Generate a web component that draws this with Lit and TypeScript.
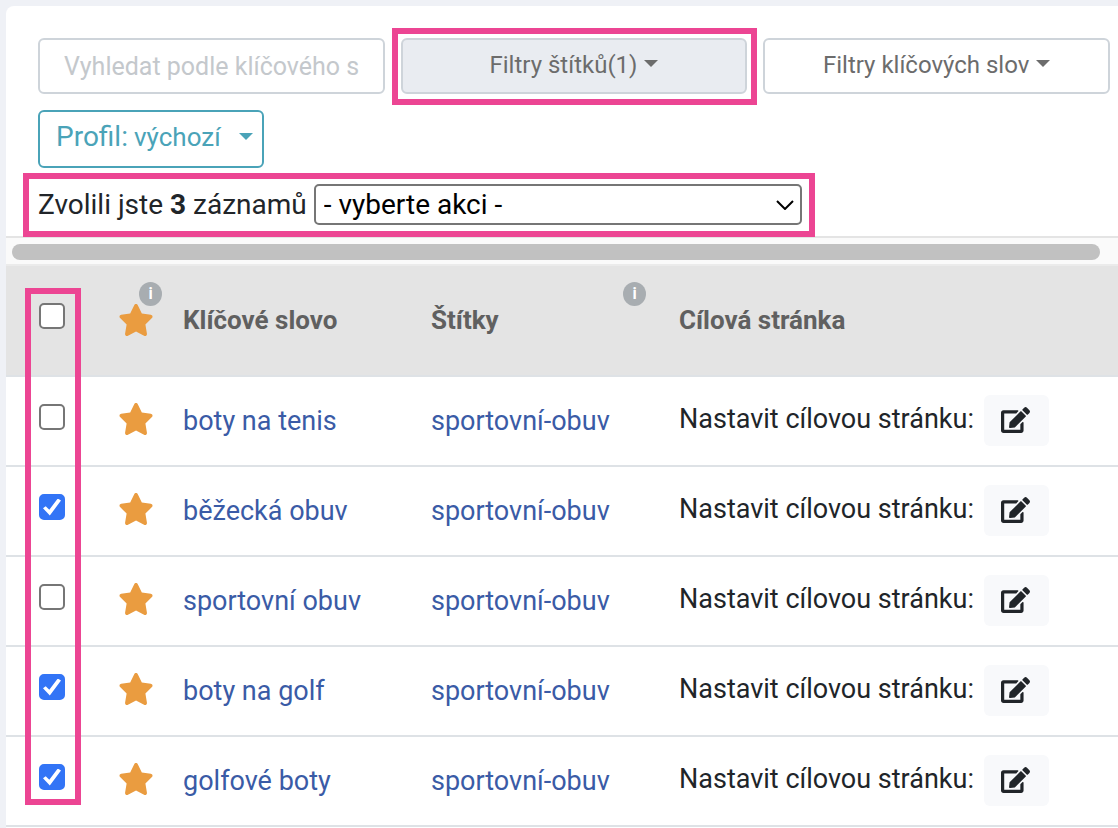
import { LitElement, html, css, svg } from "lit";
import { customElement, state } from "lit/decorators.js";

interface Row {
  keyword: string;
  tag: string;
  selected: boolean;
}

const star = html`<svg class="star" viewBox="0 0 576 512" aria-hidden="true">${svg`<path d="M316.9 18C311.6 7 300.4 0 288.1 0s-23.4 7-28.8 18L195 150.3 51.4 171.5c-12 1.8-22 10.2-25.7 21.7s-.7 24.2 7.9 32.7L137.8 329 113.2 474.7c-2 12 3 24.2 12.9 31.3s23 8 33.8 2.3l128.3-68.5 128.3 68.5c10.8 5.7 23.9 4.9 33.8-2.3s14.9-19.3 12.9-31.3L438.5 329 542.7 225.9c8.6-8.5 11.7-21.2 7.9-32.7s-13.7-19.9-25.7-21.7L381.2 150.3 316.9 18z"/>`}</svg>`;

const pencil = html`<svg class="pencil" viewBox="0 0 576 512" aria-hidden="true">${svg`<path d="M402.6 83.2l90.2 90.2c3.8 3.8 3.8 10 0 13.8L274.4 405.6l-92.8 10.3c-12.4 1.4-22.9-9.1-21.5-21.5l10.3-92.8L388.8 83.2c3.8-3.8 10-3.8 13.8 0zm162-22.9l-48.8-48.8c-15.2-15.2-39.9-15.2-55.2 0l-35.4 35.4c-3.8 3.8-3.8 10 0 13.8l90.2 90.2c3.8 3.8 10 3.8 13.8 0l35.4-35.4c15.2-15.3 15.2-40 0-55.2zM384 346.2V448H64V128h229.8c3.2 0 6.2-1.3 8.5-3.5l40-40c7.6-7.6 2.2-20.5-8.5-20.5H48C21.5 64 0 85.5 0 112v352c0 26.5 21.5 48 48 48h352c26.5 0 48-21.5 48-48V306.2c0-10.7-12.9-16-20.5-8.5l-40 40c-2.2 2.3-3.5 5.3-3.5 8.5z"/>`}</svg>`;

@customElement("app-root")
export class AppRoot extends LitElement {
  @state() private rows: Row[] = [
    { keyword: "boty na tenis", tag: "sportovní-obuv", selected: false },
    { keyword: "běžecká obuv", tag: "sportovní-obuv", selected: true },
    { keyword: "sportovní obuv", tag: "sportovní-obuv", selected: false },
    { keyword: "boty na golf", tag: "sportovní-obuv", selected: true },
    { keyword: "golfové boty", tag: "sportovní-obuv", selected: true },
  ];

  static styles = css`
    :host {
      display: block;
      box-sizing: border-box;
      min-height: 100vh;
      padding: 6px 0 0 6px;
      background: #eff1f6;
      color: #212529;
      font-family: Roboto, "Liberation Sans", sans-serif;
      font-size: 28px;
      line-height: 40px;
    }
    *, *::before, *::after { box-sizing: border-box; }
    button, input, select { font: inherit; margin: 0; }
    .panel {
      min-height: calc(100vh - 6px);
      background: #fff;
      border-top-left-radius: 8px;
    }
    .toolbar { padding: 32px 8px 11px 32px; }
    .filters {
      display: grid;
      grid-template-columns: repeat(3, minmax(0, 1fr));
      gap: 16px;
    }
    .marked { position: relative; }
    .marked::after, .column-mark {
      content: "";
      position: absolute;
      border: 6px solid #ec4593;
      pointer-events: none;
    }
    .filters .marked::after { inset: -10px -10px -11px -9px; }
    .search, .filter {
      display: block;
      width: 100%;
      height: 56px;
      border: 2px solid #ced4da;
      border-radius: 6px;
      background: #fff;
      font-size: 25px;
      line-height: 32px;
    }
    .search { padding: 0 24px; color: #495057; }
    .search::placeholder { color: #c4c8cc; opacity: 1; }
    .filter { padding: 0 0 2px; color: #6c6c6c; font-size: 24px; }
    .filter.active { background: #e9ecf1; }
    .caret {
      display: inline-block;
      margin-left: 7px;
      vertical-align: 6px;
      border: 7px solid transparent;
      border-top-color: currentColor;
      border-bottom: 0;
    }
    .profile {
      display: block;
      height: 58px;
      margin-top: 16px;
      padding: 0 9px 4px 16px;
      border: 2px solid #4aa3b8;
      border-radius: 6px;
      background: #fff;
      color: #4aa3b8;
      font-size: 28px;
    }
    .profile small { margin-left: 6px; font-size: 26px; }
    .profile .caret { margin-left: 18px; }
    .actions {
      display: inline-flex;
      align-items: center;
      gap: 7px;
      margin-top: 16px;
    }
    .actions::after { inset: -11px -13px -12px -15px; }
    .select { display: grid; align-items: center; }
    .select > * { grid-area: 1 / 1; }
    select {
      appearance: none;
      width: 488px;
      height: 41px;
      padding: 0 40px 0 8px;
      border: 2px solid #767676;
      border-radius: 5px;
      background: #fff;
      color: #000;
      line-height: 36px;
    }
    .chevron {
      justify-self: end;
      width: 18px;
      height: 10px;
      margin-right: 8px;
      fill: none;
      stroke: #000;
      stroke-width: 2;
      pointer-events: none;
    }
    .scroll {
      height: 30px;
      padding: 6px 18px 4px 6px;
      border-top: 2px solid #e4e4e4;
      border-bottom: 2px solid #ebebeb;
      background: #fafafa;
    }
    .thumb { height: 16px; border-radius: 8px; background: #c1c1c1; }
    .grid { position: relative; }
    .column-mark { inset: 22px auto 22px 19px; width: 56px; }
    table {
      width: 100%;
      table-layout: fixed;
      border-collapse: separate;
      border-spacing: 0;
    }
    .c-check { width: 98px; }
    .c-star { width: 63px; }
    .c-text { width: 248px; }
    th, td {
      position: relative;
      height: 90px;
      padding: 24px 0 0 16px;
      border-bottom: 2px solid #dee2e6;
      text-align: left;
      vertical-align: top;
      white-space: nowrap;
      font-size: 27px;
    }
    th {
      height: 111px;
      padding-top: 34px;
      background: #e4e4e4;
      color: #606060;
      font-size: 26px;
      font-weight: 700;
    }
    .check { padding-left: 33px; }
    td.target { padding-top: 18px; }
    .target > div { display: flex; align-items: flex-start; gap: 10px; }
    .target label { padding-top: 4px; }
    a { color: #3a5ba6; text-decoration: none; }
    .star {
      display: block;
      width: 36px;
      height: 32px;
      margin: 2px 0 0 -2px;
      fill: #ea9c40;
    }
    th .star { margin-top: 4px; }
    .box {
      appearance: none;
      display: grid;
      place-items: center;
      width: 26px;
      height: 26px;
      margin-top: 3px;
      border: 2px solid #767676;
      border-radius: 5px;
      background: #fff;
    }
    .box:checked { border-color: #3274f6; background: #3274f6; }
    .box:checked::after {
      content: "";
      width: 18px;
      height: 17px;
      background: #fff;
      clip-path: polygon(0 58%, 15% 46%, 35% 66%, 82% 0, 100% 12%, 38% 100%);
    }
    .info {
      position: absolute;
      top: 16px;
      right: 5px;
      width: 23px;
      height: 24px;
      border-radius: 50%;
      background: #a8adb1;
      color: #fff;
      font-size: 16px;
      line-height: 23px;
      text-align: center;
    }
    .info.inner { right: 17px; }
    .edit {
      display: grid;
      place-items: center;
      width: 65px;
      height: 51px;
      padding: 0 2px 2px 0;
      border: 0;
      border-radius: 6px;
      background: #f8f9fb;
    }
    .pencil { width: 29px; height: 26px; fill: #212529; }
  `;

  private toggle(index: number) {
    this.rows = this.rows.map((r, i) => (i === index ? { ...r, selected: !r.selected } : r));
  }

  render() {
    const count = this.rows.filter((r) => r.selected).length;
    return html`
      <main class="panel">
        <div class="toolbar">
          <div class="filters">
            <input class="search" type="text" aria-label="Vyhledat" placeholder="Vyhledat podle klíčového slova" />
            <div class="marked">
              <button class="filter active">Filtry štítků(1)<span class="caret"></span></button>
            </div>
            <button class="filter">Filtry klíčových slov<span class="caret"></span></button>
          </div>
          <button class="profile">Profil:<small>výchozí</small><span class="caret"></span></button>
          <div class="actions marked">
            <label for="action">Zvolili jste <b>${count}</b> záznamů</label>
            <div class="select">
              <select id="action"><option>- vyberte akci -</option></select>
              <svg class="chevron" viewBox="0 0 18 10" aria-hidden="true"><path d="M1 1l8 8 8-8" /></svg>
            </div>
          </div>
        </div>
        <div class="scroll"><div class="thumb"></div></div>
        <div class="grid">
          <table>
            <colgroup>
              <col class="c-check" /><col class="c-star" /><col class="c-text" /><col class="c-text" /><col />
            </colgroup>
            <thead>
              <tr>
                <th class="check"><input class="box" type="checkbox" aria-label="Vybrat vše" /></th>
                <th>${star}<span class="info">i</span></th>
                <th>Klíčové slovo</th>
                <th>Štítky<span class="info inner">i</span></th>
                <th>Cílová stránka</th>
              </tr>
            </thead>
            <tbody>
              ${this.rows.map(
                (r, i) => html`<tr>
                  <td class="check">
                    <input class="box" type="checkbox" aria-label=${r.keyword} .checked=${r.selected} @change=${() => this.toggle(i)} />
                  </td>
                  <td>${star}</td>
                  <td><a href="#">${r.keyword}</a></td>
                  <td><a href="#">${r.tag}</a></td>
                  <td class="target">
                    <div>
                      <label for="edit-${i}">Nastavit cílovou stránku:</label>
                      <button class="edit" id="edit-${i}">${pencil}</button>
                    </div>
                  </td>
                </tr>`
              )}
            </tbody>
          </table>
          <div class="column-mark"></div>
        </div>
      </main>
    `;
  }
}
